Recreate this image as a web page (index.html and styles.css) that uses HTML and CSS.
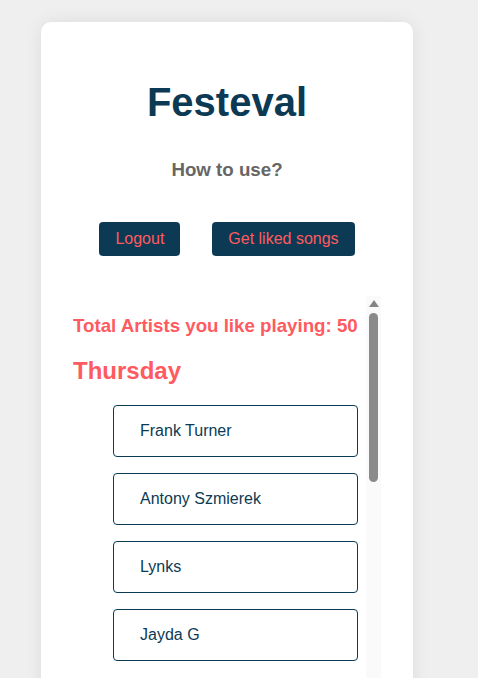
FILE: index.html
```html
<!DOCTYPE html>
<html lang="en">
<head>
<meta charset="utf-8">
<title>Festeval</title>
<link rel="stylesheet" href="styles.css">
</head>
<body>
<main class="card">
  <h1 class="title">Festeval</h1>
  <h3 class="how">How to use?</h3>
  <div class="actions">
    <button class="btn">Logout</button>
    <button class="btn">Get liked songs</button>
  </div>
  <div class="panel">
    <section class="list">
      <h3 class="total">Total Artists you like playing: 50</h3>
      <h2 class="day">Thursday</h2>
      <ul class="artists">
        <li class="artist">Frank Turner</li>
        <li class="artist">Antony Szmierek</li>
        <li class="artist">Lynks</li>
        <li class="artist">Jayda G</li>
      </ul>
    </section>
    <div class="scrollbar" aria-hidden="true">
      <span class="arrow"></span>
      <span class="thumb"></span>
    </div>
  </div>
</main>
</body>
</html>
```

FILE: styles.css
```css
html, body {
  margin: 0;
  height: 100%;
  overflow: hidden;
  background: #efefef;
  font-family: "Liberation Sans", Arial, sans-serif;
}

.card {
  box-sizing: border-box;
  width: 372px;
  margin: 22px 0 0 41px;
  min-height: 720px;
  padding: 32px 32px 0;
  background: #ffffff;
  border-radius: 10px;
  box-shadow: 0 0 18px rgba(0, 0, 0, 0.08);
}

.title {
  margin: 25.5px 0 0;
  font-size: 40px;
  font-weight: bold;
  color: #0c3a54;
  text-align: center;
}

.how {
  margin: 34.5px 0 0;
  font-size: 18.72px;
  font-weight: bold;
  color: #666666;
  text-align: center;
}

.actions {
  display: flex;
  justify-content: center;
  gap: 32px;
  margin-top: 41px;
}

.btn {
  height: 34px;
  padding: 0 16px;
  border: none;
  border-radius: 4px;
  background: #0c3a54;
  color: #ff5a5f;
  font-family: "Liberation Sans", Arial, sans-serif;
  font-size: 16px;
}

.panel {
  display: flex;
  margin-top: 40px;
  height: 420px;
}

.list {
  flex: 1;
  min-width: 0;
  overflow: hidden;
}

.scrollbar {
  width: 15px;
  flex: none;
  background: #fafafa;
  display: flex;
  flex-direction: column;
  align-items: center;
  padding-top: 4px;
  box-sizing: border-box;
}

.arrow {
  width: 0;
  height: 0;
  border-left: 5px solid transparent;
  border-right: 5px solid transparent;
  border-bottom: 7px solid #858585;
}

.thumb {
  margin-top: 6px;
  width: 9px;
  height: 169px;
  border-radius: 5px;
  background: #8a8a8a;
}

.total {
  margin: 18.72px 0;
  font-size: 18.72px;
  font-weight: bold;
  color: #ff5a5f;
}

.day {
  margin: 19.92px 0;
  font-size: 24px;
  font-weight: bold;
  color: #ff5a5f;
}

.artists {
  list-style: none;
  margin: 16px 0;
  padding: 0 8px 0 40px;
}

.artist {
  margin-bottom: 16px;
  padding: 16px 26px;
  border: 1px solid #0c3a54;
  border-radius: 4px;
  color: #0c3a54;
  font-size: 16px;
}
```
